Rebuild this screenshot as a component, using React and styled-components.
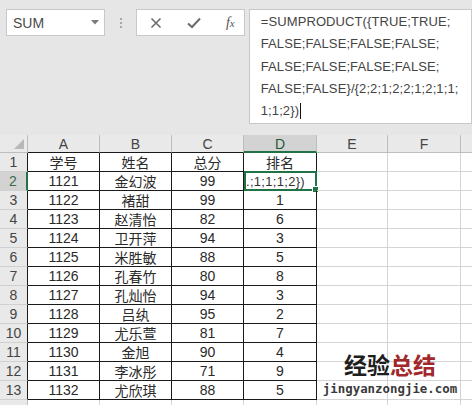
import React from "react";
import styled, { createGlobalStyle } from "styled-components";

const Global = createGlobalStyle`
  html, body { margin: 0; padding: 0; background: #ffffff; overflow: hidden; }
  #root { width: 472px; height: 405px; }
`;

const GREEN = "#217346";
const BLACK = "#1a1a1a";
const GRID = "#d4d4d4";
const HEAD_LINE = "#bdbdbd";

const Page = styled.div`
  position: relative;
  width: 472px;
  height: 405px;
  overflow: hidden;
  font-family: "Liberation Sans", "Noto Sans CJK SC", sans-serif;
  background: #ffffff;
`;

const TopBar = styled.div`
  height: 135px;
  box-sizing: border-box;
  background: #e6e6e6;
  display: flex;
  align-items: flex-start;
  padding: 9px 0 0 6px;
`;

const NameBox = styled.div`
  width: 100px;
  height: 27px;
  box-sizing: border-box;
  background: #fff;
  border: 1px solid #c8c8c8;
  display: flex;
  align-items: center;
  justify-content: space-between;
  padding: 0 5px 0 6px;
  font-size: 14px;
  color: #4a4a4a;
`;

const Dots = styled.div`
  margin: 9px 0 0 15px;
  display: flex;
  flex-direction: column;
  gap: 2px;
  & > span {
    width: 2px;
    height: 2px;
    background: #a8a8a8;
    display: block;
  }
`;

const FuncBox = styled.div`
  margin-left: 14px;
  width: 110px;
  height: 27px;
  box-sizing: border-box;
  background: #fff;
  border: 1px solid #c8c8c8;
  display: flex;
  align-items: center;
  justify-content: space-between;
  padding: 0 9px 0 13px;
  color: #6a6a6a;
`;

const Fx = styled.span`
  font-family: "Liberation Serif", serif;
  font-style: italic;
  font-size: 14px;
  color: #555;
  & > small { font-size: 11px; }
`;

const FormulaBar = styled.div`
  margin-left: 4px;
  width: 226px;
  height: 115px;
  box-sizing: border-box;
  background: #fff;
  border: 1px solid #c8c8c8;
  padding: 1px 0 0 11px;
  font-size: 13px;
  line-height: 22.3px;
  color: #444;
  letter-spacing: 0.1px;
`;

const FLine = styled.div`
  white-space: nowrap;
  display: flex;
  align-items: center;
`;

const Caret = styled.span`
  display: inline-block;
  width: 1px;
  height: 16px;
  background: #111;
  margin-left: 1px;
`;

const Row = styled.div`
  display: flex;
  height: ${(p) => p.$h}px;
`;

const Cell = styled.div`
  position: relative;
  flex: 0 0 ${(p) => p.$w}px;
  box-sizing: border-box;
  border-right: 1px solid ${(p) => p.$rc || GRID};
  border-bottom: 1px solid ${(p) => p.$bc || GRID};
  display: flex;
  align-items: center;
  justify-content: ${(p) => (p.$left ? "flex-start" : "center")};
  padding-left: ${(p) => (p.$left ? "2px" : "0")};
  font-size: 14px;
  color: #2a2a2a;
  white-space: nowrap;
  overflow: visible;
`;

const HeadCell = styled.div`
  position: relative;
  flex: 0 0 ${(p) => p.$w}px;
  box-sizing: border-box;
  background: ${(p) => (p.$active ? "#d3d3d3" : "#e9e9e9")};
  border-right: 1px solid ${HEAD_LINE};
  border-bottom: ${(p) => (p.$active ? `2px solid ${GREEN}` : `1px solid ${p.$bc || HEAD_LINE}`)};
  display: flex;
  align-items: center;
  justify-content: center;
  font-size: 14px;
  color: ${(p) => (p.$active ? "#1f5a38" : "#444")};
  padding-top: ${(p) => (p.$active ? "1px" : "0")};
`;

const RowHead = styled.div`
  flex: 0 0 28px;
  box-sizing: border-box;
  background: ${(p) => (p.$active ? "#d3d3d3" : "#e9e9e9")};
  border-right: ${(p) => (p.$active ? `2px solid ${GREEN}` : `1px solid ${p.$rc || HEAD_LINE}`)};
  border-bottom: 1px solid #d0d0d0;
  display: flex;
  align-items: center;
  justify-content: center;
  font-size: 14px;
  color: ${(p) => (p.$active ? "#3c6b4c" : "#444")};
`;

const Corner = styled.div`
  flex: 0 0 28px;
  box-sizing: border-box;
  background: #e9e9e9;
  border-right: 1px solid ${HEAD_LINE};
  border-bottom: 1px solid ${HEAD_LINE};
  display: flex;
  align-items: flex-end;
  justify-content: flex-end;
  padding: 0 3px 3px 0;
`;

const Selection = styled.div`
  position: absolute;
  left: 0;
  top: -1px;
  right: -1px;
  bottom: -1px;
  border: 2px solid ${GREEN};
  pointer-events: none;
`;

const Handle = styled.div`
  position: absolute;
  right: -4px;
  bottom: -4px;
  width: 5px;
  height: 5px;
  background: ${GREEN};
  border: 1px solid #fff;
`;

const ActiveText = styled.span`
  font-size: 13px;
  color: #333;
  letter-spacing: 0.3px;
`;

const Watermark = styled.div`
  position: absolute;
  left: 322px;
  top: 352px;
  display: flex;
  flex-direction: column;
  align-items: center;
  width: 136px;
`;

const WmTitle = styled.div`
  font-family: "Noto Sans CJK SC", sans-serif;
  font-weight: 700;
  font-size: 23px;
  line-height: 24px;
  color: #1e1e1e;
  & > span { color: #a1292b; }
`;

const WmUrl = styled.div`
  margin-top: 6px;
  font-family: "DejaVu Sans Mono", monospace;
  font-weight: 700;
  font-size: 12.4px;
  line-height: 14px;
  color: #3a3a3a;
`;

const COLS = [
  { key: "A", w: 72 },
  { key: "B", w: 72 },
  { key: "C", w: 72 },
  { key: "D", w: 73 },
  { key: "E", w: 71 },
  { key: "F", w: 73 },
  { key: "G", w: 20 },
];

const DATA = [
  ["学号", "姓名", "总分", "排名"],
  ["1121", "金幻波", "99", ".;1;1;1;2})"],
  ["1122", "褚甜", "99", "1"],
  ["1123", "赵清怡", "82", "6"],
  ["1124", "卫开萍", "94", "3"],
  ["1125", "米胜敏", "88", "5"],
  ["1126", "孔春竹", "80", "8"],
  ["1127", "孔灿怡", "94", "3"],
  ["1128", "吕纨", "95", "2"],
  ["1129", "尤乐萱", "81", "7"],
  ["1130", "金旭", "90", "4"],
  ["1131", "李冰彤", "71", "9"],
  ["1132", "尤欣琪", "88", "5"],
];

export default function App() {
  return (
    <Page>
      <Global />
      <TopBar>
        <NameBox>
          <span>SUM</span>
          <svg width="8" height="5" viewBox="0 0 8 5">
            <path d="M0 0 L8 0 L4 4.5 Z" fill="#7a7a7a" />
          </svg>
        </NameBox>
        <Dots>
          <span />
          <span />
          <span />
        </Dots>
        <FuncBox>
          <svg width="12" height="12" viewBox="0 0 12 12">
            <path d="M1.5 1.5 L10.5 10.5 M10.5 1.5 L1.5 10.5" stroke="#6c6c6c" strokeWidth="1.6" />
          </svg>
          <svg width="14" height="12" viewBox="0 0 14 12">
            <path d="M1 6.5 L5 10 L13 1.5" stroke="#6c6c6c" strokeWidth="2" fill="none" />
          </svg>
          <Fx>
            f<small>x</small>
          </Fx>
        </FuncBox>
        <FormulaBar>
          <FLine>=SUMPRODUCT({"{"}TRUE;TRUE;</FLine>
          <FLine>FALSE;FALSE;FALSE;FALSE;</FLine>
          <FLine>FALSE;FALSE;FALSE;FALSE;</FLine>
          <FLine>FALSE;FALSE{"}"}/{"{"}2;2;1;2;2;1;2;1;1;</FLine>
          <FLine>
            1;1;2{"}"})<Caret />
          </FLine>
        </FormulaBar>
      </TopBar>

      <Row $h={18}>
        <Corner>
          <svg width="10" height="10" viewBox="0 0 10 10">
            <path d="M10 0 L10 10 L0 10 Z" fill="#b8b8b8" />
          </svg>
        </Corner>
        {COLS.map((c, i) => (
          <HeadCell key={c.key} $w={c.w} $active={c.key === "D"} $bc={i < 4 ? BLACK : HEAD_LINE}>
            {c.key === "G" ? "" : c.key}
          </HeadCell>
        ))}
      </Row>

      {DATA.map((r, ri) => (
        <Row key={ri} $h={19}>
          <RowHead $active={ri === 1} $rc={BLACK}>
            {ri + 1}
          </RowHead>
          {COLS.map((c, ci) => {
            const inTable = ci < 4;
            const active = ri === 1 && ci === 3;
            return (
              <Cell
                key={c.key}
                $w={c.w}
                $rc={inTable ? BLACK : GRID}
                $bc={inTable ? BLACK : GRID}
                $left={active}
              >
                {active ? (
                  <>
                    <ActiveText>{r[ci]}</ActiveText>
                    <Selection>
                      <Handle />
                    </Selection>
                  </>
                ) : inTable ? (
                  r[ci]
                ) : (
                  ""
                )}
              </Cell>
            );
          })}
        </Row>
      ))}

      <Row $h={19}>
        <RowHead />
        {COLS.map((c) => (
          <Cell key={c.key} $w={c.w} />
        ))}
      </Row>

      <Watermark>
        <WmTitle>
          经验<span>总结</span>
        </WmTitle>
        <WmUrl>jingyanzongjie.com</WmUrl>
      </Watermark>
    </Page>
  );
}
